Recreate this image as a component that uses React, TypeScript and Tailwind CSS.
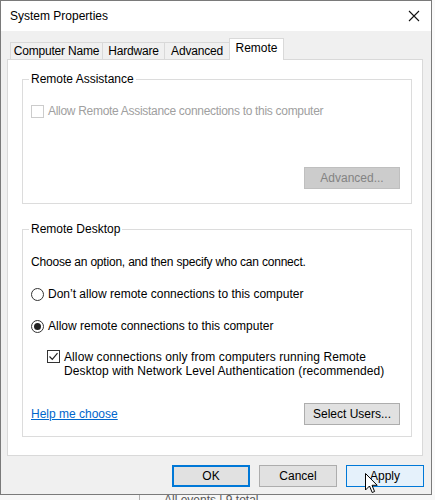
import React from "react";

const font = { fontFamily: '"Liberation Sans", Arial, sans-serif' };

function Checkbox({ checked, disabled }: { checked?: boolean; disabled?: boolean }) {
  return (
    <span
      className={
        "flex h-[13px] w-[13px] shrink-0 items-center justify-center border bg-white " +
        (disabled ? "border-[#cccccc]" : "border-[#333333]")
      }
    >
      {checked && (
        <svg width="11" height="11" viewBox="0 0 11 11" fill="none">
          <path d="M1.5 5.5 L4.3 8.3 L9.5 2.2" stroke="#222" strokeWidth="1.2" />
        </svg>
      )}
    </span>
  );
}

function Radio({ checked }: { checked?: boolean }) {
  return (
    <span className="flex h-[13px] w-[13px] shrink-0 items-center justify-center rounded-full border border-[#333333] bg-white">
      {checked && <span className="h-[7px] w-[7px] rounded-full bg-[#222222]" />}
    </span>
  );
}

function GroupBox({
  title,
  className,
  children,
}: {
  title: string;
  className: string;
  children: React.ReactNode;
}) {
  return (
    <div className={"relative ml-[14px] w-[390px] border border-[#dcdcdc] " + className}>
      <span className="absolute -top-[9px] left-[6px] bg-white px-[2px] text-[12px] leading-[16px] text-black">
        {title}
      </span>
      {children}
    </div>
  );
}

function DialogButton({ label, variant }: { label: string; variant: "default" | "normal" | "hover" }) {
  const styles = {
    default: "border-2 border-[#0078d7] bg-[#e1e1e1] text-black",
    normal: "border border-[#adadad] bg-[#e1e1e1] text-black",
    hover: "border border-[#0078d7] bg-[#e5f1fb] text-black",
  }[variant];
  return (
    <div className={"flex h-[22px] w-[78px] items-center justify-center text-[12px] " + styles}>
      {label}
    </div>
  );
}

function Tab({ label, width, selected }: { label: string; width: string; selected?: boolean }) {
  return selected ? (
    <div
      className={
        "relative z-10 -mb-px flex h-[22px] items-center justify-center border border-b-0 border-[#d9d9d9] bg-white pb-[3px] text-[12px] " +
        width
      }
    >
      {label}
    </div>
  ) : (
    <div
      className={
        "-mr-px flex h-[17px] items-center justify-center border border-b-0 border-[#d9d9d9] bg-[#f0f0f0] text-[12px] tracking-[-0.2px] " +
        width
      }
    >
      {label}
    </div>
  );
}

export default function App() {
  return (
    <div className="relative h-[500px] w-[435px] overflow-hidden bg-[#f7f7f7] text-black" style={font}>
      <div className="flex">
        {/* dialog window */}
        <div className="flex h-[495px] w-[432px] shrink-0 flex-col border border-[#7a7a7a] bg-[#f0f0f0]">
          <div className="flex h-[30px] shrink-0 items-center justify-between bg-white pl-[9px] pr-[11px]">
            <span className="text-[12px]">System Properties</span>
            <svg width="12" height="12" viewBox="0 0 12 12" fill="none">
              <path d="M1 1 L11 11 M11 1 L1 11" stroke="#111" strokeWidth="1.1" />
            </svg>
          </div>

          <div className="ml-[9px] mt-[7px] flex items-end">
            <Tab label="Computer Name" width="w-[93px]" />
            <Tab label="Hardware" width="w-[63px]" />
            <Tab label="Advanced" width="w-[66px]" />
            <Tab label="Remote" width="w-[55px]" selected />
          </div>

          <div className="ml-[6px] h-[397px] w-[416px] border border-[#d9d9d9] bg-white">
            <GroupBox title="Remote Assistance" className="mt-[19px] h-[125px]">
              <div className="ml-[8px] mt-[23px] flex h-[16px] items-center gap-[4px]">
                <Checkbox disabled />
                <span className="text-[12px] tracking-[-0.3px] text-[#a0a0a0]">
                  Allow Remote Assistance connections to this computer
                </span>
              </div>
              <div className="mr-[11px] mt-[48px] flex justify-end">
                <div className="flex h-[22px] w-[96px] items-center justify-center border border-[#bfbfbf] bg-[#cccccc] text-[12px] text-[#838383]">
                  Advanced...
                </div>
              </div>
            </GroupBox>

            <GroupBox title="Remote Desktop" className="mt-[25px] h-[208px]">
              <div className="ml-[8px] mt-[24px] h-[16px] text-[12px] leading-[16px] tracking-[-0.2px]">
                Choose an option, and then specify who can connect.
              </div>
              <div className="ml-[8px] mt-[16px] flex h-[16px] items-center gap-[4px] text-[12px]">
                <Radio />
                <span>Don’t allow remote connections to this computer</span>
              </div>
              <div className="ml-[8px] mt-[16px] flex h-[16px] items-center gap-[4px] text-[12px]">
                <Radio checked />
                <span>Allow remote connections to this computer</span>
              </div>
              <div className="ml-[24px] mt-[16px] flex items-start gap-[4px]">
                <Checkbox checked />
                <span className="text-[12px] leading-[14px] tracking-[0.1px]">
                  Allow connections only from computers running Remote
                  <br />
                  Desktop with Network Level Authentication (recommended)
                </span>
              </div>
              <div className="ml-[8px] mr-[11px] mt-[25px] flex h-[22px] items-center justify-between">
                <span className="text-[12px] text-[#0066cc] underline">Help me choose</span>
                <div className="flex h-[22px] w-[96px] items-center justify-center border border-[#adadad] bg-[#e1e1e1] text-[12px]">
                  Select Users...
                </div>
              </div>
            </GroupBox>
          </div>

          <div className="mr-[7px] mt-[9px] flex justify-end gap-[9px]">
            <DialogButton label="OK" variant="default" />
            <DialogButton label="Cancel" variant="normal" />
            <DialogButton label="Apply" variant="hover" />
          </div>
        </div>

        {/* sliver of the app behind the dialog */}
        <div className="flex-1 bg-[#fafafa]" />
      </div>

      <div className="flex h-[10px]">
        <div className="w-[140px] border-r border-[#b0b0b0]" />
        <span className="-mt-[2px] ml-[24px] text-[12px] leading-[14px] text-[#555555]">All events | 9 total</span>
      </div>

      {/* mouse pointer */}
      <svg className="absolute left-[365px] top-[473px]" width="13" height="21" viewBox="0 0 13 21">
        <path
          d="M0.5 0.5 L0.5 17 L4.5 13 L7.2 19.5 L9.6 18.5 L7 12.3 L12.2 12.3 Z"
          fill="#fff"
          stroke="#000"
          strokeWidth="1"
          strokeLinejoin="round"
        />
      </svg>
    </div>
  );
}
